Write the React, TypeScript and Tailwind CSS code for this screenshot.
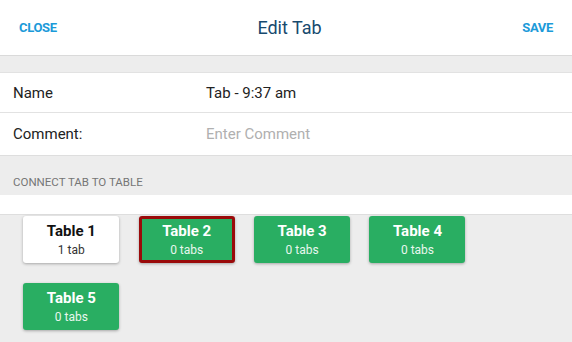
const tables = [
  { name: "Table 1", count: "1 tab", kind: "white" },
  { name: "Table 2", count: "0 tabs", kind: "selected" },
  { name: "Table 3", count: "0 tabs", kind: "green" },
  { name: "Table 4", count: "0 tabs", kind: "green" },
  { name: "Table 5", count: "0 tabs", kind: "green" },
];

const App = () => {
  return (
    <div className="w-[572px] h-[342px] overflow-hidden bg-[#ededed] font-['Roboto',sans-serif]">
      <header className="h-[56px] bg-white border-b border-[#dadada] flex items-center justify-between px-[19px]">
        <button className="text-[13px] font-bold text-[#1b9ad9] tracking-tight">CLOSE</button>
        <h1 className="text-[18px] text-[#174a6e]">Edit Tab</h1>
        <button className="text-[13px] font-bold text-[#1b9ad9] tracking-tight">SAVE</button>
      </header>

      <section className="mt-[16px] bg-white border-t border-[#e2e2e2]">
        <div className="h-[40px] flex items-center pl-[13px] pt-[1px] border-b border-[#e2e2e2] text-[15px] text-[#222]">
          <span className="w-[193px]">Name</span>
          <span>Tab - 9:37 am</span>
        </div>
        <div className="h-[42px] flex items-center pl-[13px] text-[15px] text-[#222]">
          <span className="w-[193px]">Comment:</span>
          <span className="text-[#b0b0b0]">Enter Comment</span>
        </div>
      </section>

      <div className="h-[40px] flex items-end pb-[4px] pl-[13px] text-[11.5px] text-[#767676] border-t border-[#dedede]">
        CONNECT TAB TO TABLE
      </div>
      <div className="h-[20px] bg-white border-b border-[#dedede]" />

      <div className="flex flex-wrap gap-x-[19.4px] gap-y-[20px] pt-[1px] pl-[23.3px] w-[500px]">
        {tables.map((t) => (
          <div
            key={t.name}
            className={
              t.kind === "white"
                ? "w-[96px] h-[47px] rounded-[3px] bg-white text-[#111] shadow-[0_1px_3px_rgba(0,0,0,0.3)] flex flex-col items-center justify-center"
                : t.kind === "selected"
                ? "w-[96px] h-[47px] rounded-[3px] bg-[#29ae62] text-white border-[3px] border-[#9a0a0a] shadow-[0_1px_3px_rgba(0,0,0,0.3)] flex flex-col items-center justify-center"
                : "w-[96px] h-[47px] rounded-[3px] bg-[#29ae62] text-white shadow-[0_1px_3px_rgba(0,0,0,0.3)] flex flex-col items-center justify-center"
            }
          >
            <span className="text-[15px] font-bold leading-[18px]">{t.name}</span>
            <span className={t.kind === "white" ? "text-[12px] leading-[16px] mt-[2px] text-[#333]" : "text-[12px] leading-[16px] mt-[2px] text-[#e8f7ee]"}>
              {t.count}
            </span>
          </div>
        ))}
      </div>
    </div>
  );
};

export default App;
